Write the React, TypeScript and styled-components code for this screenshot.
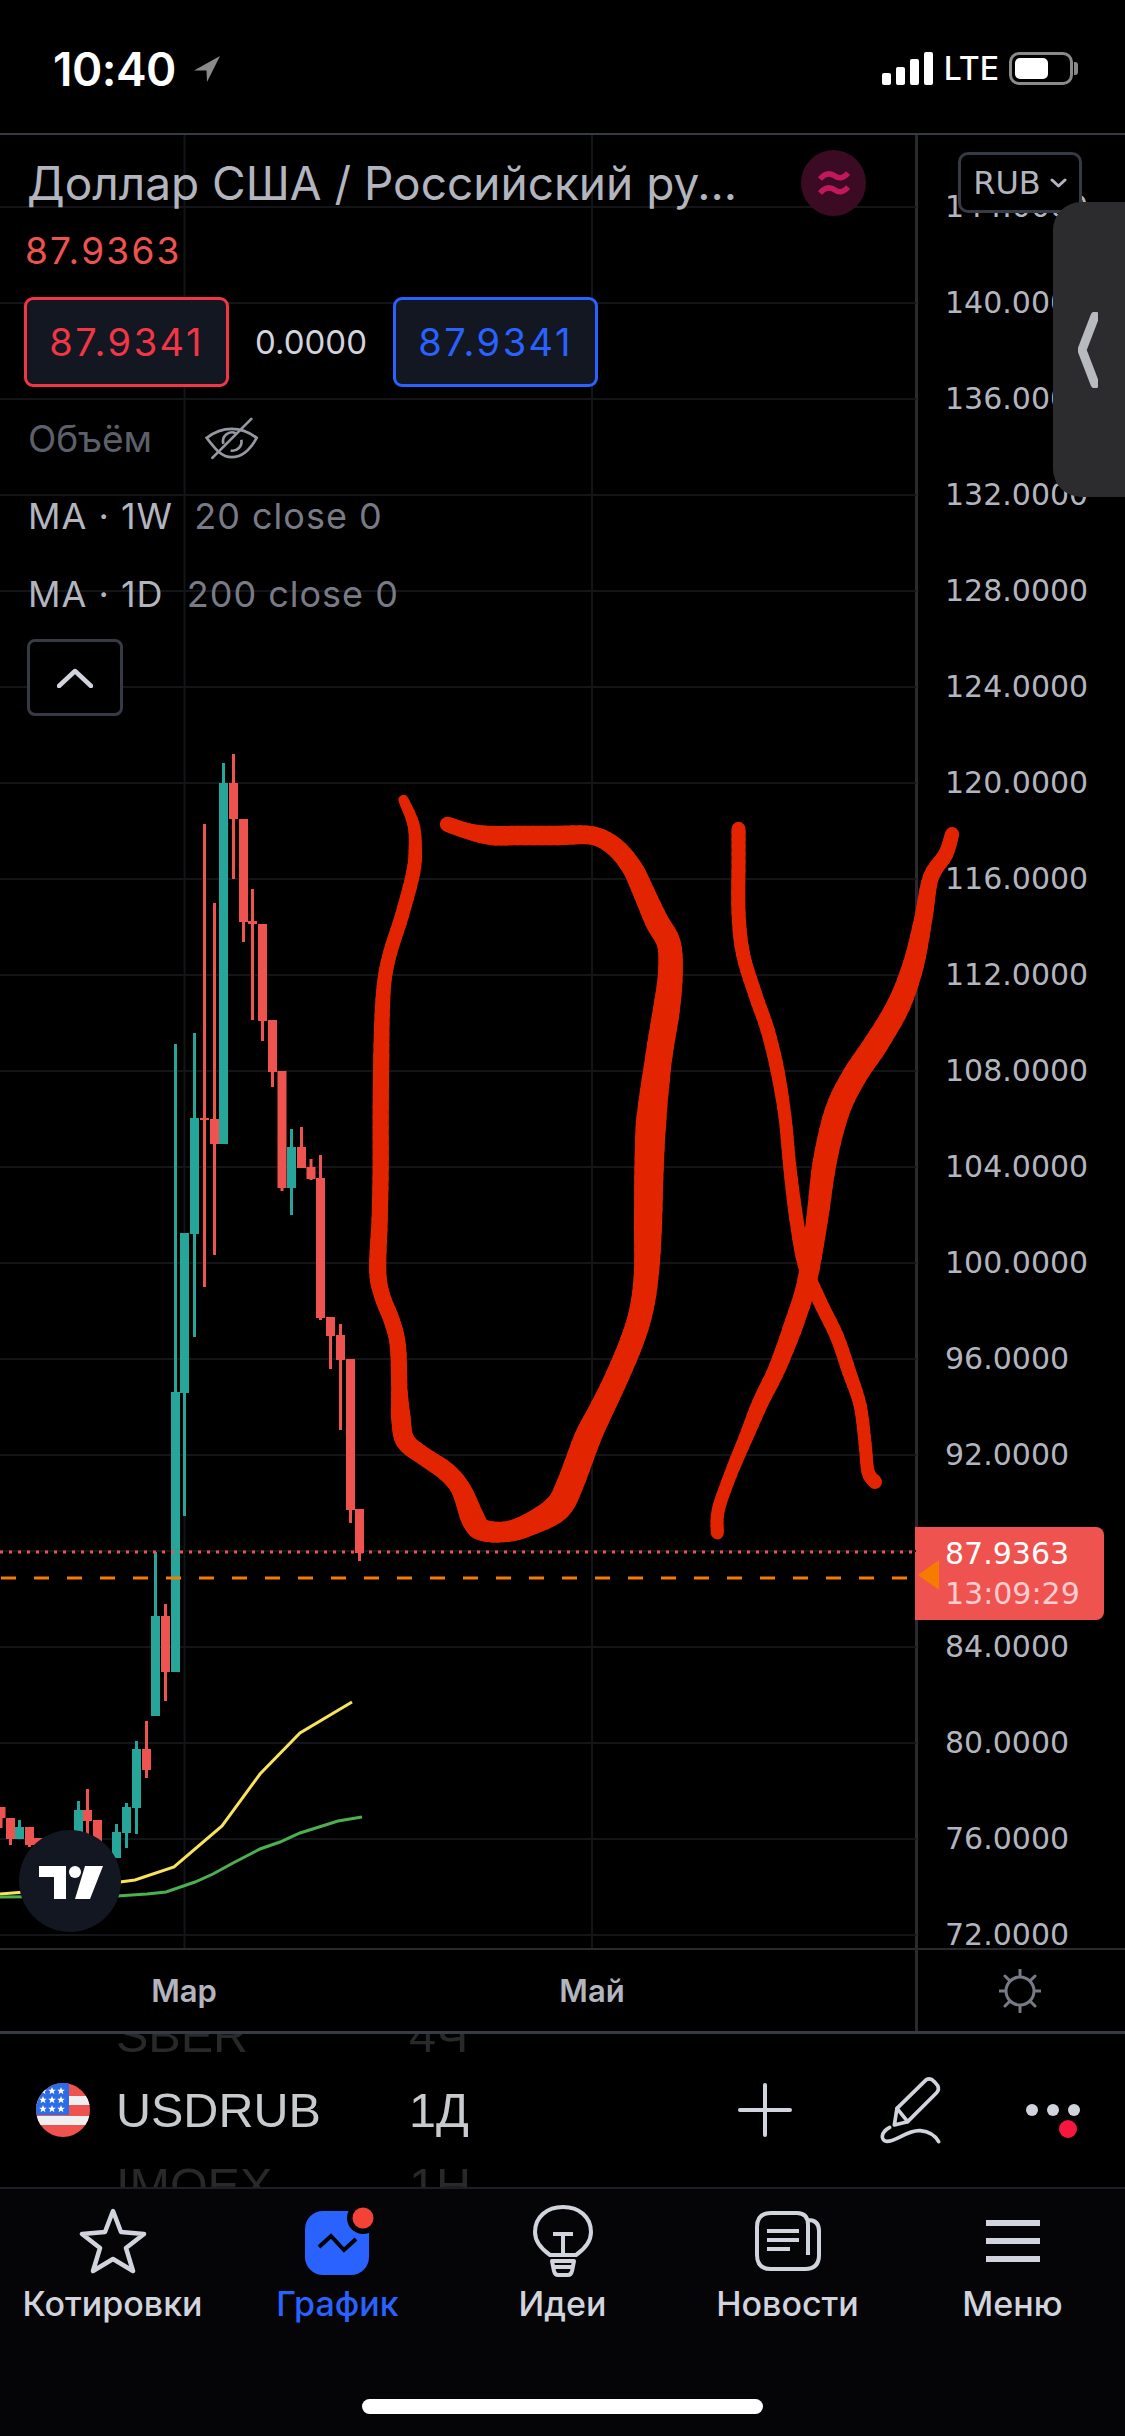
import styled, { createGlobalStyle } from "styled-components";

const GlobalStyle = createGlobalStyle`
  html, body {
    margin: 0;
    padding: 0;
    background: #000;
  }
  * {
    box-sizing: border-box;
  }
`;

const UI_FONT = `Inter, "Liberation Sans", sans-serif`;
const AXIS_FONT = `"DejaVu Sans", sans-serif`;

const UP = "#26a69a";
const DOWN = "#ef5350";

// x, body top, body bottom, wick top, wick bottom, colour (page coordinates)
const CANDLES: [number, number, number, number, number, string][] = [
  [1, 1807, 1818, 1807, 1828, DOWN],
  [10.5, 1818, 1839, 1818, 1845, DOWN],
  [19.5, 1827, 1839, 1820, 1839, UP],
  [29.5, 1827, 1845, 1827, 1847, DOWN],
  [38.5, 1838, 1852, 1838, 1856, DOWN],
  [78.5, 1810, 1833, 1801, 1840, UP],
  [87.5, 1810, 1821, 1789, 1837, DOWN],
  [97.5, 1820, 1843, 1820, 1850, DOWN],
  [116.5, 1832, 1858, 1824, 1858, UP],
  [126.5, 1807, 1833, 1803, 1848, UP],
  [136.5, 1749, 1808, 1741, 1834, UP],
  [146.5, 1749, 1770, 1721, 1778, DOWN],
  [155.5, 1616, 1716, 1552, 1716, UP],
  [165.5, 1616, 1672, 1604, 1701, DOWN],
  [175.5, 1392, 1672, 1044, 1672, UP],
  [184.5, 1233, 1393, 1233, 1516, UP],
  [194.5, 1118, 1234, 1033, 1337, UP],
  [204.5, 1118, 1120, 824, 1287, DOWN],
  [214.5, 1119, 1144, 903, 1255, DOWN],
  [223.5, 783, 1144, 763, 1144, UP],
  [233.5, 783, 819, 754, 879, DOWN],
  [243.5, 819, 922, 819, 942, DOWN],
  [252.5, 921, 924, 889, 1020, DOWN],
  [262.5, 924, 1021, 924, 1041, DOWN],
  [272.5, 1020, 1072, 1020, 1087, DOWN],
  [282, 1071, 1188, 1071, 1191, DOWN],
  [291.5, 1147, 1188, 1129, 1215, UP],
  [301.5, 1147, 1168, 1127, 1168, DOWN],
  [311, 1167, 1179, 1159, 1180, DOWN],
  [320.5, 1178, 1318, 1155, 1320, DOWN],
  [330.5, 1317, 1336, 1317, 1369, DOWN],
  [340.5, 1335, 1360, 1324, 1430, DOWN],
  [350.5, 1359, 1510, 1359, 1523, DOWN],
  [359.5, 1509, 1553, 1509, 1561, DOWN],
];

const MA_YELLOW = "0,1894 25,1892 120,1882 135,1880 174,1867 222,1826 260,1774 300,1733 352,1702";
const MA_GREEN = "0,1897 117,1896 147,1894 166,1892 195,1882 213,1874 233,1863 260,1849 280,1842 300,1833 338,1821 362,1817";

const GRID_Y = Array.from({ length: 19 }, (_, i) => 207 + i * 96);
const PRICES = Array.from({ length: 19 }, (_, i) => (144 - i * 4).toFixed(4));

// hand-drawn marks over the chart: x, y, width as read off the crop
type P = [number, number, number];

const STROKE_O: P[] = [
  [108, 78, 18], [128, 125, 22], [132, 170, 24], [128, 220, 26], [105, 305, 26], [82, 375, 26],
  [70, 430, 26], [65, 500, 28], [63, 600, 30], [62, 700, 30], [62, 800, 30], [60, 900, 30],
  [56, 1000, 32], [65, 1050, 30], [85, 1100, 30], [97, 1150, 30], [100, 1240, 30], [103, 1290, 36],
  [112, 1335, 36], [150, 1365, 34], [195, 1395, 36], [225, 1430, 36], [250, 1490, 44], [270, 1510, 40],
  [320, 1512, 38], [370, 1495, 42], [420, 1465, 50], [445, 1420, 50], [480, 1330, 50], [505, 1280, 46],
  [535, 1220, 44], [570, 1140, 44], [590, 1075, 44], [600, 1000, 46], [603, 900, 52], [605, 800, 54],
  [610, 700, 56], [625, 580, 50], [640, 490, 50], [648, 420, 46], [645, 360, 44], [620, 315, 44],
  [590, 250, 40], [570, 210, 38], [535, 170, 36], [490, 148, 34], [420, 148, 36], [340, 148, 36],
  [285, 148, 36], [240, 140, 30], [197, 126, 28],
];

const STROKE_X1: P[] = [
  [786, 135, 26], [786, 200, 26], [786, 300, 26], [795, 380, 26], [820, 460, 26], [845, 530, 26],
  [865, 610, 26], [880, 700, 24], [890, 800, 24], [903, 900, 26], [920, 990, 26], [950, 1060, 26],
  [985, 1130, 26], [1010, 1200, 26], [1032, 1265, 24], [1042, 1340, 24], [1048, 1395, 24], [1062, 1415, 26],
];

const STROKE_X2: P[] = [
  [743, 1515, 24], [745, 1470, 24], [770, 1400, 24], [800, 1330, 26], [830, 1260, 30], [865, 1190, 32],
  [900, 1100, 36], [925, 1020, 36], [945, 900, 40], [960, 790, 44], [985, 690, 46], [1020, 620, 46],
  [1065, 555, 46], [1110, 480, 44], [1140, 400, 40], [1160, 310, 34], [1175, 230, 30], [1205, 185, 28],
  [1218, 145, 26],
];

const toPage = ([x, y, w]: P): P => [350 + x / 2.023, 760 + y / 1.96, w * 0.54];

const smooth = (raw: P[]): P[] => {
  const pts = raw.map(toPage);
  const out: P[] = [];
  for (let i = 0; i < pts.length - 1; i++) {
    const a = pts[Math.max(i - 1, 0)];
    const b = pts[i];
    const c = pts[i + 1];
    const d = pts[Math.min(i + 2, pts.length - 1)];
    for (let s = 0; s < 5; s++) {
      const t = s / 5;
      const f = (k: number) =>
        0.5 *
        (2 * b[k] +
          (c[k] - a[k]) * t +
          (2 * a[k] - 5 * b[k] + 4 * c[k] - d[k]) * t * t +
          (3 * b[k] - a[k] - 3 * c[k] + d[k]) * t * t * t);
      out.push([f(0), f(1), b[2] + (c[2] - b[2]) * t]);
    }
  }
  out.push(pts[pts.length - 1]);
  return out;
};

const Brush = ({ points }: { points: P[] }) => {
  const pts = smooth(points);
  return (
    <g stroke="#e32400" strokeLinecap="round">
      {pts.slice(1).map((p, i) => (
        <line key={i} x1={pts[i][0]} y1={pts[i][1]} x2={p[0]} y2={p[1]} strokeWidth={p[2]} />
      ))}
    </g>
  );
};

const Chart = () => (
  <ChartSvg viewBox="0 135 916 1813">
    {GRID_Y.map((y) => (
      <line key={y} x1="0" x2="916" y1={y} y2={y} stroke="#141519" strokeWidth="2" />
    ))}
    <line x1="184.5" x2="184.5" y1="135" y2="1948" stroke="#141519" strokeWidth="2" />
    <line x1="592" x2="592" y1="135" y2="1948" stroke="#141519" strokeWidth="2" />

    <polyline points={MA_YELLOW} fill="none" stroke="#f7e35c" strokeWidth="3" />
    <polyline points={MA_GREEN} fill="none" stroke="#4caf50" strokeWidth="3" />

    {CANDLES.map(([x, top, bottom, wickTop, wickBottom, color]) => (
      <g key={x} fill={color}>
        <rect x={x - 1.5} y={wickTop} width="3" height={wickBottom - wickTop} />
        <rect x={x - 4.5} y={top} width="9" height={bottom - top} />
      </g>
    ))}

    <line x1="0" x2="915" y1="1552" y2="1552" stroke="#ef5350" strokeWidth="3" strokeDasharray="3 6" />
    <line x1="1" x2="915" y1="1578" y2="1578" stroke="#f57c00" strokeWidth="3" strokeDasharray="15 18" />

    <Brush points={STROKE_O} />
    <Brush points={STROKE_X1} />
    <Brush points={STROKE_X2} />

    <circle cx="70" cy="1881" r="51" fill="#131722" />
    <path d="M39 1866H66V1899H54V1877H39Z M85 1866H103L90 1899H75Z" fill="#fff" />
    <circle cx="75" cy="1872" r="6" fill="#fff" />
  </ChartSvg>
);

const LocationArrow = () => (
  <svg width="26" height="26" viewBox="0 0 26 26">
    <path d="M26 0L0 14.5L12.5 14.5L13 26Z" fill="#8a8a8a" />
  </svg>
);

const EyeOff = () => (
  <svg width="55" height="43" viewBox="610 50 165 128" fill="none" stroke="#9598a1" strokeWidth="8">
    <path d="M618 112C640 95 665 85 693 85C725 85 750 98 768 112C750 145 725 170 693 170C660 170 640 140 618 112Z" />
    <path d="M668 130A27 27 0 0 1 705 98M722 118A27 27 0 0 1 690 150" />
    <path d="M635 172L752 55" strokeLinecap="round" />
  </svg>
);

const Star = ({ x, y }: { x: number; y: number }) => (
  <polygon
    transform={`translate(${x} ${y})`}
    points="0,-4 1.1,-1.3 3.8,-1.2 1.7,0.5 2.4,3.2 0,1.6 -2.4,3.2 -1.7,0.5 -3.8,-1.2 -1.1,-1.3"
    fill="#fff"
  />
);

const Flag = () => (
  <FlagSvg width="54" height="54" viewBox="0 0 54 54">
    <clipPath id="flag-circle">
      <circle cx="27" cy="27" r="27" />
    </clipPath>
    <g clipPath="url(#flag-circle)">
      <rect width="54" height="54" fill="#ef5350" />
      <rect y="13" width="54" height="9" fill="#f0f0f0" />
      <rect y="33" width="54" height="9" fill="#f0f0f0" />
      <rect width="33" height="32" fill="#2c6ce6" />
      {[7, 16, 25].map((x) => [8, 17, 26].map((y) => <Star key={`${x}-${y}`} x={x} y={y} />))}
    </g>
  </FlagSvg>
);

const PenIcon = () => (
  <svg width="66" height="72" viewBox="530 95 198 216" fill="none" stroke="#d1d4dc" strokeWidth="11" strokeLinecap="round" strokeLinejoin="round">
    <path d="M582 248L590 198L678 112Q690 105 702 118L712 130Q718 142 708 152L622 238Z" />
    <path d="M590 198L622 238" />
    <path d="M568 255C540 270 540 295 560 297C590 297 620 262 660 265C690 268 705 280 715 298" />
  </svg>
);

const StarIcon = () => (
  <svg width="68" height="68" viewBox="0 0 68 68" fill="none" stroke="#d1d4dc" strokeWidth="4.5" strokeLinejoin="round">
    <path d="M34 4L42 25L65 27L47 41L54 64L34 52L14 64L21 41L3 27L26 25Z" />
  </svg>
);

const GraphIcon = () => (
  <GraphSvg width="72" height="72" viewBox="0 0 72 72">
    <rect x="0" y="6" width="64" height="64" rx="18" fill="#2962ff" />
    <path d="M14 42L26 31L39 45L51 34" fill="none" stroke="#000" strokeWidth="4" />
    <circle cx="58" cy="13" r="16" fill="#050507" />
    <circle cx="58" cy="13" r="10.5" fill="#f44336" />
  </GraphSvg>
);

const BulbIcon = () => (
  <svg width="60" height="72" viewBox="0 0 60 72" fill="none" stroke="#d1d4dc" strokeWidth="4" strokeLinejoin="round">
    <path d="M17 50C7 43 2 35 2 27C2 12 14 2 30 2C46 2 58 12 58 27C58 35 53 43 43 50Z" />
    <path d="M20 29H40M30 29V50" />
    <path d="M19 56H41L39 66Q38 70 35 70H25Q22 70 21 66Z" />
    <path d="M20 62H40" />
  </svg>
);

const NewsIcon = () => (
  <svg width="66" height="60" viewBox="0 0 66 60" fill="none" stroke="#d1d4dc" strokeWidth="4">
    <path d="M53 9Q64 9 64 20V44Q64 58 50 58H16Q2 58 2 44V16Q2 2 16 2H42Q53 2 53 14V44" />
    <path d="M12 20H44M12 29H44M12 38H35" />
  </svg>
);

const MenuIcon = () => (
  <svg width="54" height="42" viewBox="0 0 54 42" fill="#d1d4dc">
    <rect y="0" width="54" height="6" />
    <rect y="18" width="54" height="6" />
    <rect y="36" width="54" height="6" />
  </svg>
);

const TABS = [
  { label: "Котировки", icon: <StarIcon /> },
  { label: "График", icon: <GraphIcon />, active: true },
  { label: "Идеи", icon: <BulbIcon /> },
  { label: "Новости", icon: <NewsIcon /> },
  { label: "Меню", icon: <MenuIcon /> },
];

const App = () => (
  <Page>
    <GlobalStyle />

    <StatusBar>
      <TimeGroup>
        <Clock>10:40</Clock>
        <LocationArrow />
      </TimeGroup>
      <StatusRight>
        <Signal>
          {[12, 18, 26, 33].map((h) => (
            <SignalBar key={h} $height={h} />
          ))}
        </Signal>
        <Carrier>LTE</Carrier>
        <Battery>
          <BatteryFill />
        </Battery>
      </StatusRight>
    </StatusBar>

    <ChartRow>
      <ChartPane>
        <Chart />
        <Legend>
          <TitleRow>
            <Title>Доллар США / Российский ру...</Title>
            <CurrencyBadge>
              <svg width="34" height="34" viewBox="0 0 34 34" fill="none" stroke="#c2185b" strokeWidth="5.5">
                <path d="M3 13C9 6 14 7 18 10C22 13 27 12 31 7" />
                <path d="M3 27C9 20 14 21 18 24C22 27 27 26 31 21" />
              </svg>
            </CurrencyBadge>
          </TitleRow>
          <LastPrice>87.9363</LastPrice>
          <QuoteRow>
            <QuoteBox $color="#f23645">87.9341</QuoteBox>
            <Spread>0.0000</Spread>
            <QuoteBox $color="#2962ff">87.9341</QuoteBox>
          </QuoteRow>
          <VolumeRow>
            <VolumeLabel>Объём</VolumeLabel>
            <EyeOff />
          </VolumeRow>
          <StudyRow>
            MA · 1W <StudyArgs $gap={10}>20 close 0</StudyArgs>
          </StudyRow>
          <StudyRow>
            MA · 1D <StudyArgs $gap={12}>200 close 0</StudyArgs>
          </StudyRow>
          <CollapseButton>
            <svg width="36" height="20" viewBox="0 0 36 20" fill="none" stroke="#d1d4dc" strokeWidth="4.5" strokeLinecap="round" strokeLinejoin="round">
              <path d="M2 18L18 3L34 18" />
            </svg>
          </CollapseButton>
        </Legend>
      </ChartPane>

      <PriceAxis>
        {PRICES.map((price) => (
          <PriceTick key={price}>{price}</PriceTick>
        ))}
        <CurrencyButton>
          RUB
          <svg width="17" height="10" viewBox="0 0 17 10" fill="none" stroke="#b2b5be" strokeWidth="3" strokeLinecap="round" strokeLinejoin="round">
            <path d="M2 2L8.5 8L15 2" />
          </svg>
        </CurrencyButton>
        <PriceTag>
          <TagArrow />
          <TagPrice>87.9363</TagPrice>
          <TagCountdown>13:09:29</TagCountdown>
        </PriceTag>
      </PriceAxis>
    </ChartRow>

    <TimeAxis>
      <TimeLabels>
        <TimeLabel>Мар</TimeLabel>
        <TimeLabel>Май</TimeLabel>
      </TimeLabels>
      <ThemeCell>
        <svg width="42" height="44" viewBox="0 0 42 44" fill="none" stroke="#787b86" strokeWidth="3" strokeLinecap="round">
          <circle cx="21" cy="22" r="14" />
          <path d="M21 1V7M21 37V43M0 22H6M36 22H42M6 7L10 11M36 7L32 11M6 37L10 33M36 37L32 33" />
        </svg>
      </ThemeCell>
    </TimeAxis>

    <Toolbar>
      <PickerRow>
        <span />
        <GhostText>SBER</GhostText>
        <GhostText>4Ч</GhostText>
      </PickerRow>
      <PickerRow>
        <Flag />
        <Symbol>USDRUB</Symbol>
        <Symbol>1Д</Symbol>
        <ToolIcons>
          <PlusSvg width="54" height="54" viewBox="0 0 54 54" stroke="#d1d4dc" strokeWidth="4" strokeLinecap="round">
            <path d="M27 2V52M2 27H52" />
          </PlusSvg>
          <PenIcon />
          <MoreButton>
            <MoreDot />
            <MoreDot />
            <MoreDot />
            <MoreBadge />
          </MoreButton>
        </ToolIcons>
      </PickerRow>
      <PickerRow>
        <span />
        <GhostText>IMOEX</GhostText>
        <GhostText>1Н</GhostText>
      </PickerRow>
    </Toolbar>

    <TabBar>
      <Tabs>
        {TABS.map((tab) => (
          <Tab key={tab.label}>
            <TabIcon>{tab.icon}</TabIcon>
            <TabLabel $active={tab.active}>{tab.label}</TabLabel>
          </Tab>
        ))}
      </Tabs>
      <HomeIndicator />
    </TabBar>

    <SideHandle>
      <svg width="20" height="76" viewBox="0 0 20 76" fill="none" stroke="#b9b9c0" strokeWidth="9" strokeLinecap="round" strokeLinejoin="round">
        <path d="M17 4L4 38L17 72" />
      </svg>
    </SideHandle>
  </Page>
);

export default App;

const Page = styled.div`
  position: relative;
  width: 1125px;
  height: 2436px;
  overflow: hidden;
  background: #000;
  display: flex;
  flex-direction: column;
  font-family: ${UI_FONT};
`;

const StatusBar = styled.header`
  height: 135px;
  flex: none;
  border-bottom: 2px solid #363a45;
  padding: 4px 52px 0 53px;
  display: flex;
  align-items: center;
  justify-content: space-between;
`;

const TimeGroup = styled.div`
  display: flex;
  align-items: center;
  gap: 18px;
`;

const Clock = styled.span`
  color: #fff;
  font-size: 46px;
  font-weight: 600;
  letter-spacing: -0.5px;
`;

const StatusRight = styled.div`
  display: flex;
  align-items: center;
`;

const Signal = styled.div`
  display: flex;
  align-items: flex-end;
  gap: 5px;
  height: 33px;
  margin-right: 11px;
`;

const SignalBar = styled.i<{ $height: number }>`
  display: block;
  width: 9px;
  height: ${(p) => p.$height}px;
  border-radius: 2px;
  background: #fff;
`;

const Carrier = styled.span`
  color: #fff;
  font-size: 32px;
  font-weight: 500;
  margin-right: 10px;
`;

const Battery = styled.div`
  position: relative;
  width: 64px;
  height: 33px;
  border: 3px solid #8a8a8a;
  border-radius: 10px;
  padding: 3px;

  &::after {
    content: "";
    position: absolute;
    right: -8px;
    top: 7px;
    width: 4px;
    height: 13px;
    border-radius: 0 3px 3px 0;
    background: #8a8a8a;
  }
`;

const BatteryFill = styled.div`
  width: 33px;
  height: 100%;
  border-radius: 5px;
  background: #fff;
`;

const ChartRow = styled.main`
  height: 1815px;
  flex: none;
  display: flex;
  border-bottom: 2px solid #2a2a2c;
`;

const ChartPane = styled.section`
  position: relative;
  z-index: 1;
  width: 915px;
  flex: none;
`;

const ChartSvg = styled.svg`
  position: absolute;
  inset: 0;
  width: 916px;
  height: 1813px;
  overflow: visible;
`;

const Legend = styled.div`
  position: relative;
  padding: 15px 0 0 27px;
  display: flex;
  flex-direction: column;
  align-items: flex-start;
`;

const TitleRow = styled.div`
  display: flex;
  align-items: center;
  height: 66px;
`;

const Title = styled.h1`
  width: 774px;
  margin: 0;
  color: #b2b5be;
  font-size: 46px;
  font-weight: 400;
  white-space: nowrap;
`;

const CurrencyBadge = styled.div`
  width: 65px;
  height: 66px;
  border-radius: 50%;
  background: #3a0b22;
  display: flex;
  align-items: center;
  justify-content: center;
`;

const LastPrice = styled.div`
  height: 70px;
  margin-left: -2px;
  color: #ef5350;
  font-size: 37px;
  letter-spacing: 2.2px;
  line-height: 70px;
`;

const QuoteRow = styled.div`
  display: flex;
  align-items: center;
  margin: 11px 0 0 -3px;
`;

const QuoteBox = styled.div<{ $color: string }>`
  width: 205px;
  height: 90px;
  border: 3px solid ${(p) => p.$color};
  border-radius: 9px;
  background: #131722;
  color: ${(p) => p.$color};
  font-size: 38px;
  letter-spacing: 2.5px;
  display: flex;
  align-items: center;
  justify-content: center;
`;

const Spread = styled.div`
  width: 164px;
  color: #d1d4dc;
  font-size: 33px;
  text-align: center;
`;

const VolumeRow = styled.div`
  display: flex;
  align-items: center;
  gap: 52px;
  height: 78px;
  margin: 12px 0 0 1px;
`;

const VolumeLabel = styled.span`
  color: #5d606b;
  font-size: 37px;
`;

const StudyRow = styled.div`
  height: 78px;
  margin-left: 1px;
  color: #b2b5be;
  font-size: 36px;
  letter-spacing: 1px;
  line-height: 78px;
  white-space: nowrap;
`;

const StudyArgs = styled.span<{ $gap: number }>`
  margin-left: ${(p) => p.$gap}px;
  color: #787b86;
`;

const CollapseButton = styled.div`
  width: 96px;
  height: 77px;
  margin-top: 6px;
  border: 3px solid #363a45;
  border-radius: 8px;
  background: #000;
  display: flex;
  align-items: center;
  justify-content: center;
`;

const PriceAxis = styled.aside`
  position: relative;
  flex: 1;
  box-shadow: inset 3px 0 #2a2a2c;
  padding: 24px 0 0 30px;
  overflow: hidden;
  font-family: ${AXIS_FONT};
`;

const PriceTick = styled.div`
  height: 96px;
  color: #b2b5be;
  font-size: 30px;
  line-height: 96px;
`;

const CurrencyButton = styled.div`
  position: absolute;
  left: 43px;
  top: 17px;
  width: 124px;
  height: 61px;
  border: 3px solid #363a45;
  border-radius: 10px;
  background: #000;
  color: #b2b5be;
  font-size: 32px;
  display: flex;
  align-items: center;
  justify-content: center;
  gap: 9px;
`;

const PriceTag = styled.div`
  position: absolute;
  left: 0;
  top: 1392px;
  width: 189px;
  height: 93px;
  padding: 7px 0 0 30px;
  border-radius: 0 8px 8px 0;
  background: #ef5350;
  font-size: 30px;
  line-height: 40px;
`;

const TagArrow = styled.div`
  position: absolute;
  left: 3px;
  top: 33px;
  width: 21px;
  height: 30px;
  background: #f57c00;
  clip-path: polygon(100% 0, 100% 100%, 0 50%);
`;

const TagPrice = styled.div`
  color: #fff;
`;

const TagCountdown = styled.div`
  color: #ffcdd2;
`;

const TimeAxis = styled.div`
  height: 84px;
  flex: none;
  display: flex;
  border-bottom: 3px solid #363a45;
`;

const TimeLabels = styled.div`
  width: 915px;
  display: grid;
  grid-template-columns: 368px 448px;
  align-items: center;
`;

const TimeLabel = styled.span`
  color: #b2b5be;
  font-size: 31px;
  font-weight: 600;
  text-align: center;
`;

const ThemeCell = styled.div`
  flex: 1;
  box-shadow: inset 3px 0 #2a2a2c;
  display: flex;
  align-items: center;
  justify-content: center;
`;

const Toolbar = styled.div`
  height: 153px;
  flex: none;
  padding-bottom: 2px;
  overflow: hidden;
  display: flex;
  flex-direction: column;
  justify-content: center;
`;

const PickerRow = styled.div`
  height: 75px;
  flex: none;
  display: grid;
  grid-template-columns: 116px 293px 1fr auto;
  align-items: center;
`;

const FlagSvg = styled.svg`
  margin-left: 36px;
`;

const GhostText = styled.span`
  color: #29292b;
  font-family: "Liberation Sans", sans-serif;
  font-size: 48.5px;
`;

const Symbol = styled.span`
  color: #c8cbce;
  font-family: "Liberation Sans", sans-serif;
  font-size: 48.5px;
`;

const ToolIcons = styled.div`
  display: flex;
  align-items: center;
  gap: 53px;
  padding-right: 45px;
`;

const PlusSvg = styled.svg`
  margin-right: 32px;
`;

const MoreButton = styled.div`
  position: relative;
  display: flex;
  gap: 9px;
  margin-left: 30px;
`;

const MoreDot = styled.i`
  display: block;
  width: 12px;
  height: 12px;
  border-radius: 50%;
  background: #d1d4dc;
`;

const MoreBadge = styled.i`
  position: absolute;
  right: 3px;
  top: 16px;
  width: 18px;
  height: 18px;
  border-radius: 50%;
  background: #f7163f;
`;

const TabBar = styled.nav`
  flex: 1;
  border-top: 2px solid #1e1e24;
  background: #050507;
  display: flex;
  flex-direction: column;
  align-items: center;
`;

const Tabs = styled.div`
  width: 100%;
  display: grid;
  grid-template-columns: repeat(5, 1fr);
`;

const Tab = styled.div`
  display: flex;
  flex-direction: column;
  align-items: center;
`;

const TabIcon = styled.div`
  height: 92px;
  margin-top: 3px;
  padding-top: 6px;
  display: flex;
  align-items: center;
  justify-content: center;
`;

const GraphSvg = styled.svg`
  margin-left: 6px;
`;

const TabLabel = styled.span<{ $active?: boolean }>`
  margin-top: -2px;
  color: ${(p) => (p.$active ? "#2962ff" : "#d1d4dc")};
  font-size: 34px;
  font-weight: 500;
  line-height: 44px;
`;

const HomeIndicator = styled.div`
  width: 401px;
  height: 15px;
  margin-top: 73px;
  border-radius: 8px;
  background: #fff;
`;

const SideHandle = styled.div`
  position: absolute;
  z-index: 2;
  right: 0;
  top: 202px;
  width: 72px;
  height: 295px;
  padding-left: 25px;
  border-radius: 28px 0 0 28px;
  background: #2c2c2e;
  display: flex;
  align-items: center;
`;
